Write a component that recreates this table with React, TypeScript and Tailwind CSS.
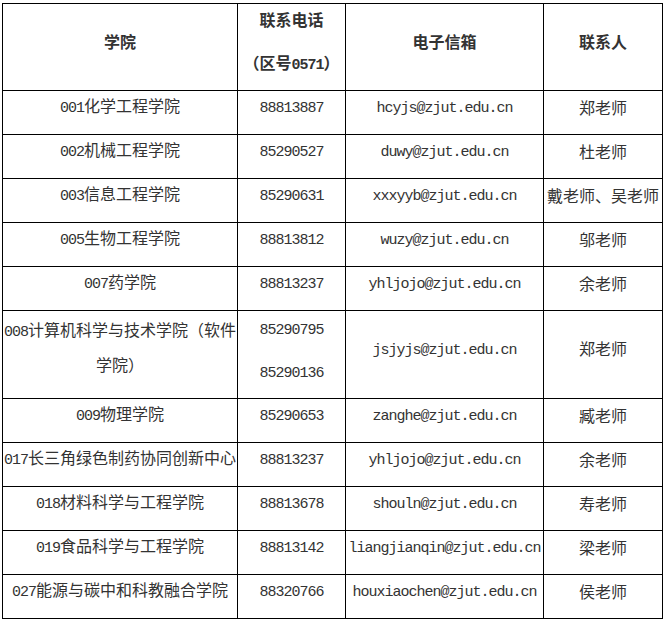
import React from "react";

const CJK = '"Noto Sans CJK SC", "Noto Sans", sans-serif';

function Mixed({ text }: { text: string }) {
  const parts = text.split(/([\x20-\x7e]+)/).filter((p) => p.length > 0);
  return (
    <>
      {parts.map((p, i) =>
        /^[\x20-\x7e]+$/.test(p) ? (
          <span key={i} className="font-['Liberation_Mono',monospace] text-[15px] tracking-[-1px]">
            {p}
          </span>
        ) : (
          <span key={i}>{p}</span>
        )
      )}
    </>
  );
}

type Row = { name: string; phone: string; email: string; person: string };

const rows: Row[] = [
  { name: "001化学工程学院", phone: "88813887", email: "hcyjs@zjut.edu.cn", person: "郑老师" },
  { name: "002机械工程学院", phone: "85290527", email: "duwy@zjut.edu.cn", person: "杜老师" },
  { name: "003信息工程学院", phone: "85290631", email: "xxxyyb@zjut.edu.cn", person: "戴老师、吴老师" },
  { name: "005生物工程学院", phone: "88813812", email: "wuzy@zjut.edu.cn", person: "邬老师" },
  { name: "007药学院", phone: "88813237", email: "yhljojo@zjut.edu.cn", person: "余老师" },
];

const rows2: Row[] = [
  { name: "009物理学院", phone: "85290653", email: "zanghe@zjut.edu.cn", person: "臧老师" },
  { name: "017长三角绿色制药协同创新中心", phone: "88813237", email: "yhljojo@zjut.edu.cn", person: "余老师" },
  { name: "018材料科学与工程学院", phone: "88813678", email: "shouln@zjut.edu.cn", person: "寿老师" },
  { name: "019食品科学与工程学院", phone: "88813142", email: "liangjianqin@zjut.edu.cn", person: "梁老师" },
  { name: "027能源与碳中和科教融合学院", phone: "88320766", email: "houxiaochen@zjut.edu.cn", person: "侯老师" },
];

const td = "border border-black p-0 text-center align-middle whitespace-nowrap";

function DataRow({ r }: { r: Row }) {
  return (
    <tr className="h-[44px]">
      <td className={td}>
        <div className="pb-[11px] leading-[20px]"><Mixed text={r.name} /></div>
      </td>
      <td className={td}>
        <div className="pb-[11px] leading-[20px]"><Mixed text={r.phone} /></div>
      </td>
      <td className={td}>
        <div className="pb-[11px] leading-[20px]"><Mixed text={r.email} /></div>
      </td>
      <td className={td}>
        <div className="pb-[11px] leading-[20px]"><Mixed text={r.person} /></div>
      </td>
    </tr>
  );
}

export default function App() {
  return (
    <div className="bg-white w-[664px] h-[622px] pt-[3px] pl-[2px] text-[16px] text-[#333]" style={{ fontFamily: CJK }}>
      <table className="table-fixed border-collapse w-[660px]">
        <colgroup>
          <col className="w-[235px]" />
          <col className="w-[108px]" />
          <col className="w-[198px]" />
          <col className="w-[119px]" />
        </colgroup>
        <thead>
          <tr className="h-[87px]">
            <th className={td + " font-bold"}>
              <div className="pb-[13px] leading-[20px]">学院</div>
            </th>
            <th className={td + " font-bold"}>
              <div className="flex flex-col items-center gap-[23px] pb-[10px] leading-[20px]">
                <span>联系电话</span>
                <span><Mixed text="（区号0571）" /></span>
              </div>
            </th>
            <th className={td + " font-bold"}>
              <div className="pb-[13px] leading-[20px]">电子信箱</div>
            </th>
            <th className={td + " font-bold"}>
              <div className="pb-[13px] leading-[20px]">联系人</div>
            </th>
          </tr>
        </thead>
        <tbody>
          {rows.map((r, i) => (
            <DataRow key={i} r={r} />
          ))}
          <tr className="h-[88px]">
            <td className={td}>
              <div className="flex flex-col items-center gap-[11px] pb-[16px] leading-[20px]">
                <span><Mixed text="008计算机科学与技术学院（软件" /></span>
                <span>学院）</span>
              </div>
            </td>
            <td className={td}>
              <div className="flex flex-col items-center gap-[19px] pb-[8px] leading-[20px]">
                <span><Mixed text="85290795" /></span>
                <span><Mixed text="85290136" /></span>
              </div>
            </td>
            <td className={td}>
              <div className="pb-[12px] leading-[20px]"><Mixed text="jsjyjs@zjut.edu.cn" /></div>
            </td>
            <td className={td}>
              <div className="pb-[13px] leading-[20px]">郑老师</div>
            </td>
          </tr>
          {rows2.map((r, i) => (
            <DataRow key={i} r={r} />
          ))}
        </tbody>
      </table>
    </div>
  );
}
